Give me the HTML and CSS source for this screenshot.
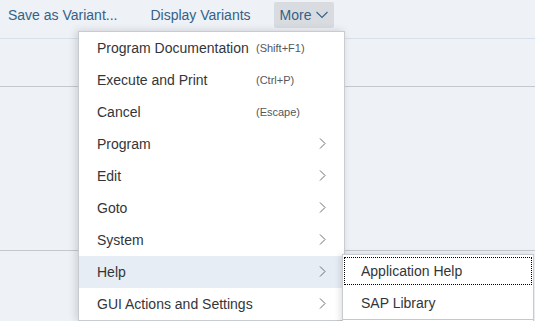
FILE: index.html
```html
<!DOCTYPE html>
<html lang="en">
<head>
    <meta charset="UTF-8">
    <title>Program Menu</title>
    <link rel="stylesheet" href="styles.css">
</head>
<body>
    <div class="toolbar">
        <button class="tool">Save as Variant...</button>
        <button class="tool">Display Variants</button>
        <button class="tool more">More
            <svg width="12" height="8" viewBox="0 0 12 8"><path d="M0.5 1 L6 6.5 L11.5 1" fill="none" stroke="#346187" stroke-width="1.1"/></svg>
        </button>
    </div>
    <div class="content">
        <div class="section first"></div>
        <div class="section second"></div>
        <div class="section third"></div>
    </div>

    <div class="menu">
        <div class="item"><span class="label">Program Documentation</span><span class="key">(Shift+F1)</span></div>
        <div class="item"><span class="label">Execute and Print</span><span class="key">(Ctrl+P)</span></div>
        <div class="item"><span class="label">Cancel</span><span class="key">(Escape)</span></div>
        <div class="item sub"><span class="label">Program</span><svg class="arrow" width="7" height="11" viewBox="0 0 7 11"><path d="M1 0.5 L6 5.5 L1 10.5" fill="none" stroke="#6a6d70" stroke-width="1"/></svg></div>
        <div class="item sub"><span class="label">Edit</span><svg class="arrow" width="7" height="11" viewBox="0 0 7 11"><path d="M1 0.5 L6 5.5 L1 10.5" fill="none" stroke="#6a6d70" stroke-width="1"/></svg></div>
        <div class="item sub"><span class="label">Goto</span><svg class="arrow" width="7" height="11" viewBox="0 0 7 11"><path d="M1 0.5 L6 5.5 L1 10.5" fill="none" stroke="#6a6d70" stroke-width="1"/></svg></div>
        <div class="item sub"><span class="label">System</span><svg class="arrow" width="7" height="11" viewBox="0 0 7 11"><path d="M1 0.5 L6 5.5 L1 10.5" fill="none" stroke="#6a6d70" stroke-width="1"/></svg></div>
        <div class="item sub active"><span class="label">Help</span><svg class="arrow" width="7" height="11" viewBox="0 0 7 11"><path d="M1 0.5 L6 5.5 L1 10.5" fill="none" stroke="#6a6d70" stroke-width="1"/></svg></div>
        <div class="item sub"><span class="label">GUI Actions and Settings</span><svg class="arrow" width="7" height="11" viewBox="0 0 7 11"><path d="M1 0.5 L6 5.5 L1 10.5" fill="none" stroke="#6a6d70" stroke-width="1"/></svg></div>
    </div>

    <div class="submenu">
        <div class="item focus"><span class="label">Application Help</span></div>
        <div class="item"><span class="label">SAP Library</span></div>
    </div>
</body>
</html>
```

FILE: styles.css
```css
body {
    margin: 0;
    font-family: "Liberation Sans", Arial, sans-serif;
    background-color: #eef1f6;
    color: #32363a;
    width: 535px;
    height: 321px;
    overflow: hidden;
    position: relative;
}
.toolbar {
    display: flex;
    align-items: center;
    height: 39px;
    border-bottom: 1px solid #d6e0ec;
    box-sizing: border-box;
}
.tool {
    font-family: inherit;
    font-size: 14px;
    color: #346187;
    background: none;
    border: none;
    height: 26px;
    padding: 0 8px;
    margin-right: 17px;
    margin-top: -9px;
    cursor: pointer;
}
.tool.more {
    background-color: #d8dce0;
    border-radius: 2px;
    padding: 0 6px;
    margin-left: -2px;
    display: flex;
    align-items: center;
    gap: 4px;
}
.content .section {
    box-sizing: border-box;
}
.section.first {
    height: 48px;
    border-bottom: 1px solid #c4c8cc;
}
.section.second {
    height: 164px;
    border-bottom: 1px solid #c4c8cc;
}
.menu {
    position: absolute;
    left: 78px;
    top: 31px;
    width: 267px;
    background-color: #ffffff;
    border: 1px solid #c8cbcf;
    box-shadow: -2px 0 8px rgba(0, 0, 0, 0.15);
    box-sizing: border-box;
}
.item {
    display: flex;
    align-items: center;
    height: 32px;
    font-size: 14px;
    padding-left: 18px;
    position: relative;
}
.item .label {
    width: 159px;
    white-space: nowrap;
}
.item .key {
    font-size: 11px;
    color: #54585c;
}
.item .arrow {
    position: absolute;
    left: 240px;
    top: 10px;
}
.item.active {
    background-color: #e7edf4;
}
.submenu {
    position: absolute;
    left: 342px;
    top: 254px;
    width: 192px;
    height: 80px;
    background-color: #ffffff;
    border: 1px solid #c8cbcf;
    box-shadow: -2px 0 6px rgba(0, 0, 0, 0.12);
    box-sizing: border-box;
}
.submenu .item.focus {
    margin: 2px 1px 0 1px;
    height: 28px;
    padding-left: 17px;
    outline: 1px dotted #000000;
    outline-offset: -1px;
}
.submenu .item + .item {
    margin-top: 2px;
    border-bottom: 1px solid #c4c8cc;
}
```
